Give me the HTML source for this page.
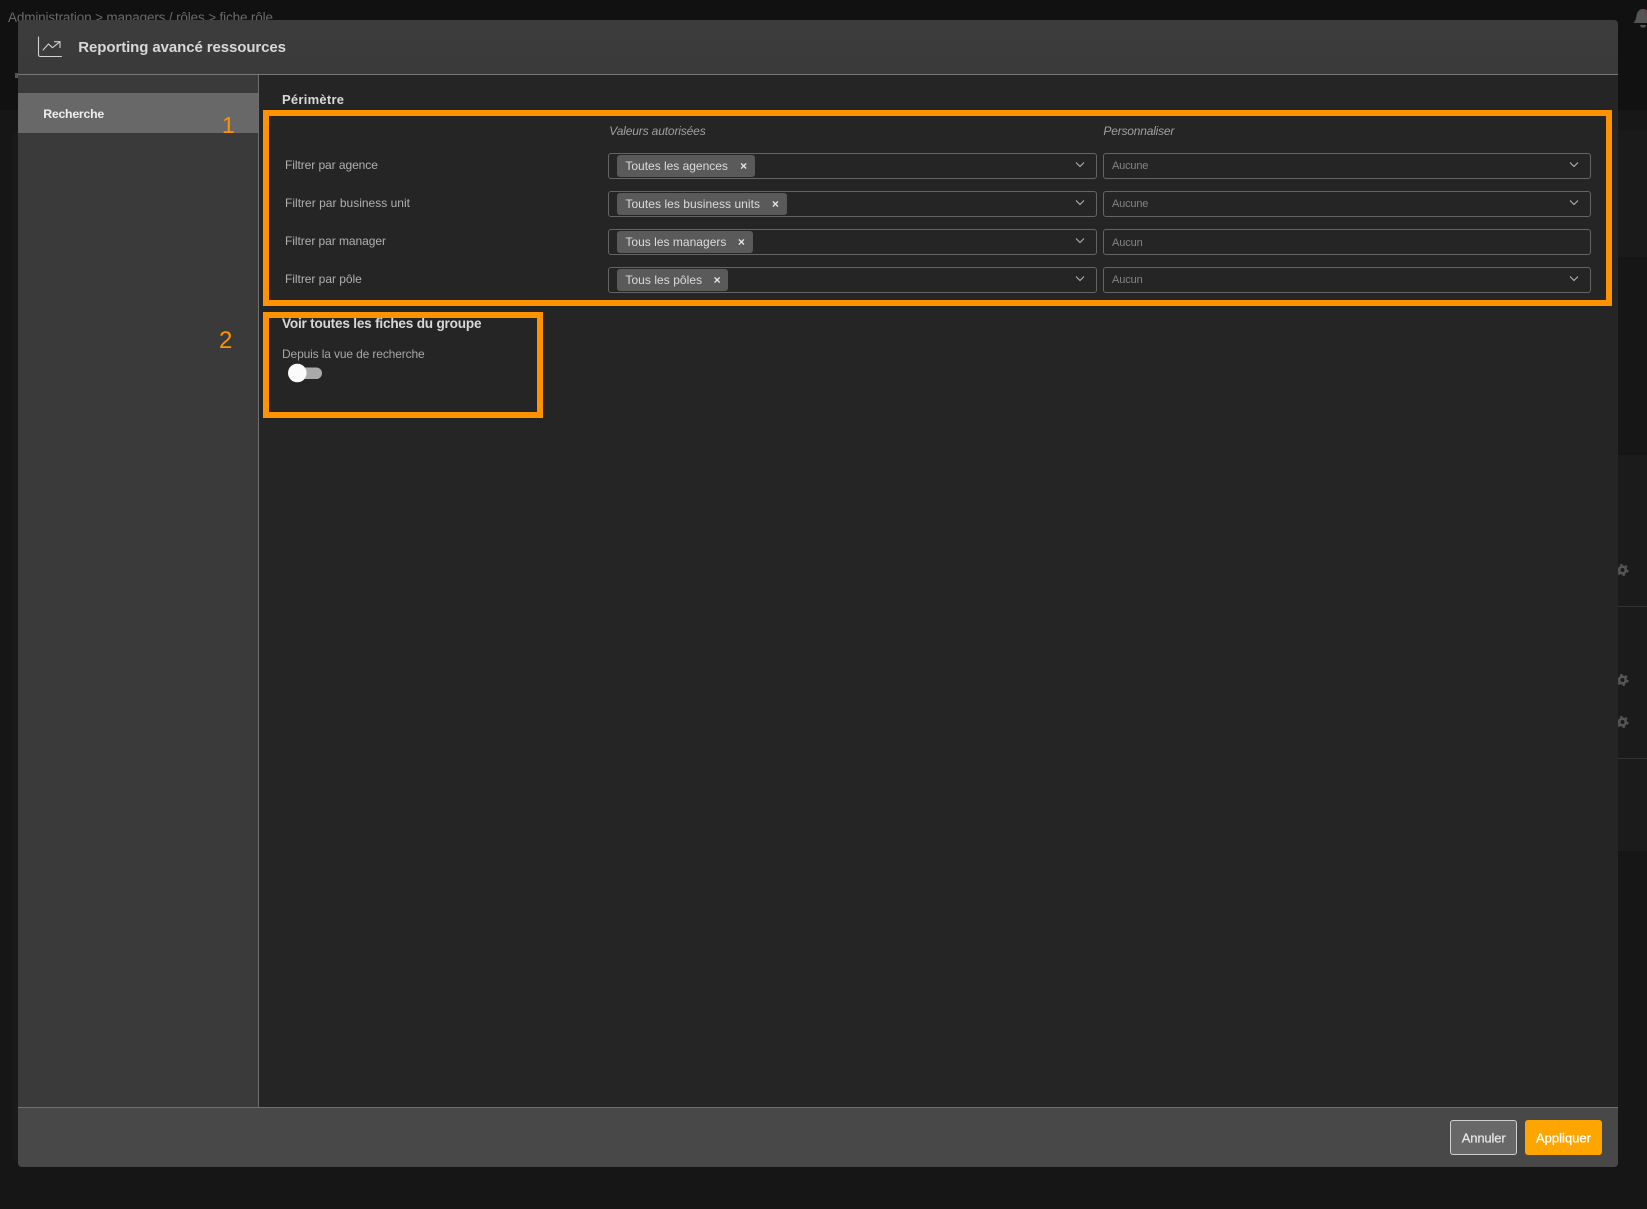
<!DOCTYPE html>
<html lang="fr">
<head>
<meta charset="utf-8">
<title>Reporting avancé ressources</title>
<style>
html,body{margin:0;padding:0;width:1647px;height:1209px;overflow:hidden;background:#161616;font-family:"Liberation Sans",sans-serif}
.a{position:absolute;box-sizing:border-box}
svg{position:absolute;left:0;top:0}
svg text{font-family:"Liberation Sans",sans-serif;filter:blur(.35px)}
.sel{position:absolute;box-sizing:border-box;height:26px;border:1px solid #646464;border-radius:3px}
.chip{position:absolute;height:22px;background:#5a5a5a;border-radius:3px}
.box{position:absolute;box-sizing:border-box;border:6px solid #ff9200}
</style>
</head>
<body>
<div class="a" style="left:0;top:0;width:1647px;height:110px;background:#111"></div>
<div class="a" style="left:1618px;top:110px;width:29px;height:20px;background:#171717"></div>
<div class="a" style="left:1618px;top:130px;width:29px;height:127px;background:#1a1a1a"></div>
<div class="a" style="left:1618px;top:455px;width:29px;height:396px;background:#1b1b1b"></div>
<div class="a" style="left:1618px;top:606px;width:29px;height:1px;background:#333"></div>
<div class="a" style="left:1618px;top:758px;width:29px;height:1px;background:#333"></div>
<div class="a" style="left:13px;top:132px;width:10px;height:1029px;background:#1a1a1a;border-radius:3px"></div>
<div class="a" style="left:15px;top:73px;width:4px;height:5px;background:#555"></div>

<svg width="1647" height="1209" viewBox="0 0 1647 1209">
  <text x="8" y="22" font-size="13.5" fill="#6a6a6a" textLength="265" lengthAdjust="spacing">Administration &gt; managers / rôles &gt; fiche rôle</text>
  <g fill="none" stroke="#555">
    <circle cx="1622.5" cy="570" r="3.3" stroke-width="2.6"/><circle cx="1622.5" cy="570" r="5.3" stroke-width="1.6" stroke-dasharray="2.6 2.95"/>
    <circle cx="1622.5" cy="680" r="3.3" stroke-width="2.6"/><circle cx="1622.5" cy="680" r="5.3" stroke-width="1.6" stroke-dasharray="2.6 2.95"/>
    <circle cx="1622.5" cy="722" r="3.3" stroke-width="2.6"/><circle cx="1622.5" cy="722" r="5.3" stroke-width="1.6" stroke-dasharray="2.6 2.95"/>
  </g>
  <path d="M1643 9c-4 0-6 3-6.500 7-.3 3-1.500 5-3 7h19c-1.500-2-2.700-4-3-7-.5-4-2.500-7-6.500-7z" fill="#555"/>
  <path d="M1640 25h6l-1 2.500h-4z" fill="#555"/>
  <circle cx="1646" cy="12" r="1.600" fill="#7a3a4a"/>
</svg>

<!-- modal -->
<div class="a" style="left:18px;top:20px;width:1600px;height:1147px;background:#252525;border-radius:4px;overflow:hidden">
  <div class="a" style="left:0;top:0;width:1600px;height:54px;background:linear-gradient(#3c3c3c,#3a3a3a)"></div>
  <div class="a" style="left:0;top:54px;width:1600px;height:1px;background:#777"></div>
  <div class="a" style="left:0;top:55px;width:240px;height:1032px;background:#3a3a3a"></div>
  <div class="a" style="left:240px;top:55px;width:1px;height:1032px;background:#6e6e6e"></div>
  <div class="a" style="left:0;top:73px;width:240px;height:40px;background:#686868"></div>
  <div class="a" style="left:0;top:1087px;width:1600px;height:60px;background:#484848;border-top:1px solid #707070"></div>
</div>

<!-- selects -->
<div class="sel" style="left:608px;top:153px;width:489px"></div>
<div class="sel" style="left:608px;top:191px;width:489px"></div>
<div class="sel" style="left:608px;top:229px;width:489px"></div>
<div class="sel" style="left:608px;top:267px;width:489px"></div>
<div class="sel" style="left:1103px;top:153px;width:488px"></div>
<div class="sel" style="left:1103px;top:191px;width:488px"></div>
<div class="sel" style="left:1103px;top:229px;width:488px"></div>
<div class="sel" style="left:1103px;top:267px;width:488px"></div>
<div class="chip" style="left:617px;top:155px;width:138px"></div>
<div class="chip" style="left:617px;top:193px;width:170px"></div>
<div class="chip" style="left:617px;top:231px;width:136px"></div>
<div class="chip" style="left:617px;top:269px;width:111px"></div>

<!-- buttons -->
<div class="a" style="left:1450px;top:1120px;width:67px;height:35px;background:#686868;border:1.500px solid #cfcfcf;border-radius:3px"></div>
<div class="a" style="left:1525px;top:1120px;width:77px;height:35px;background:#ffa500;border-radius:3px"></div>

<!-- orange annotation boxes -->
<div class="box" style="left:263px;top:110px;width:1349px;height:196px"></div>
<div class="box" style="left:263px;top:312px;width:280px;height:106px"></div>

<svg width="1647" height="1209" viewBox="0 0 1647 1209">
  <!-- header icon -->
  <g fill="none" stroke="#d0d0d0" stroke-width="1.100" stroke-linecap="round" stroke-linejoin="round">
    <path d="M38.500 37V54.500Q38.500 56.500 40.500 56.500H61.500"/>
    <path d="M43 50L48.500 44L52.500 47.700L60 41.700"/>
    <path d="M54.500 41.700H60V47.500"/>
  </g>
  <text x="78.300" y="52" font-size="15" font-weight="700" fill="#d8d8d8" textLength="207.700" lengthAdjust="spacing">Reporting avancé ressources</text>

  <text x="43.200" y="118" font-size="12.300" font-weight="700" fill="#eeeeee" textLength="61" lengthAdjust="spacing">Recherche</text>
  <text x="222" y="133" font-size="23" fill="#ff9200">1</text>
  <text x="219" y="348" font-size="24" fill="#ff9200">2</text>

  <text x="282" y="104" font-size="13" font-weight="700" fill="#d8d8d8" textLength="62" lengthAdjust="spacing">Périmètre</text>

  <text x="609.300" y="135" font-size="12" font-style="italic" fill="#a0a0a0" textLength="96.400" lengthAdjust="spacing">Valeurs autorisées</text>
  <text x="1103.400" y="135" font-size="12" font-style="italic" fill="#a0a0a0" textLength="71" lengthAdjust="spacing">Personnaliser</text>

  <g font-size="12" fill="#b0b0b0">
    <text x="285" y="169" textLength="92.900" lengthAdjust="spacing">Filtrer par agence</text>
    <text x="285" y="207" textLength="125" lengthAdjust="spacing">Filtrer par business unit</text>
    <text x="285" y="245" textLength="101" lengthAdjust="spacing">Filtrer par manager</text>
    <text x="285" y="283" textLength="76.800" lengthAdjust="spacing">Filtrer par pôle</text>
  </g>

  <g font-size="12" fill="#dcdcdc">
    <text x="625.400" y="170" textLength="102.500" lengthAdjust="spacing">Toutes les agences</text>
    <text x="625.400" y="208" textLength="134.600" lengthAdjust="spacing">Toutes les business units</text>
    <text x="625.400" y="246" textLength="101" lengthAdjust="spacing">Tous les managers</text>
    <text x="625.400" y="284" textLength="76.700" lengthAdjust="spacing">Tous les pôles</text>
  </g>
  <g font-size="12" font-weight="700" fill="#e6e6e6" text-anchor="middle">
    <text x="743.600" y="170">×</text>
    <text x="775.400" y="208">×</text>
    <text x="741.400" y="246">×</text>
    <text x="717.100" y="284">×</text>
  </g>

  <g font-size="11" fill="#848484">
    <text x="1112" y="169" textLength="36.400" lengthAdjust="spacing">Aucune</text>
    <text x="1112" y="207" textLength="36.400" lengthAdjust="spacing">Aucune</text>
    <text x="1112" y="246" textLength="30.700" lengthAdjust="spacing">Aucun</text>
    <text x="1112" y="283" textLength="30.700" lengthAdjust="spacing">Aucun</text>
  </g>

  <g fill="none" stroke="#b8b8b8" stroke-width="1">
    <path d="M1076 162.500l4 4 4-4"/>
    <path d="M1076 200.500l4 4 4-4"/>
    <path d="M1076 238.500l4 4 4-4"/>
    <path d="M1076 276.500l4 4 4-4"/>
    <path d="M1570 162.500l4 4 4-4"/>
    <path d="M1570 200.500l4 4 4-4"/>
    <path d="M1570 276.500l4 4 4-4"/>
  </g>

  <text x="282" y="328" font-size="13.600" font-weight="700" fill="#d8d8d8" textLength="199.500" lengthAdjust="spacing">Voir toutes les fiches du groupe</text>
  <text x="282" y="358" font-size="12" fill="#a6a6a6" textLength="142.700" lengthAdjust="spacing">Depuis la vue de recherche</text>
  <rect x="292" y="367.500" width="30" height="11.500" rx="5.750" fill="#aaaaaa"/>
  <circle cx="297.300" cy="373" r="9.300" fill="#fbfbfb"/>

  <text x="1461.700" y="1142.500" font-size="13" fill="#e6e6e6" stroke="#e6e6e6" stroke-width=".25" textLength="44" lengthAdjust="spacing">Annuler</text>
  <text x="1536" y="1142.500" font-size="13" fill="#ffffff" stroke="#ffffff" stroke-width=".3" textLength="55" lengthAdjust="spacing">Appliquer</text>
</svg>
</body>
</html>
